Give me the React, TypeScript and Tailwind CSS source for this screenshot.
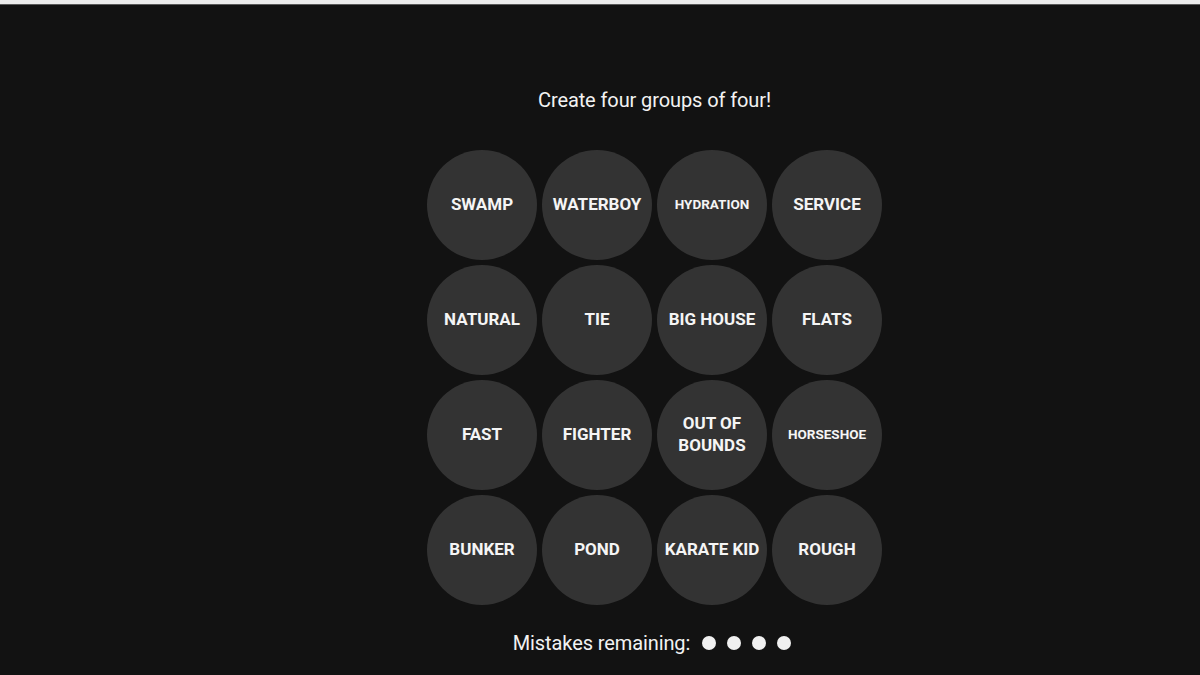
const words: { label: string; small?: boolean; wrap?: boolean }[] = [
  { label: 'SWAMP' },
  { label: 'WATERBOY' },
  { label: 'HYDRATION', small: true },
  { label: 'SERVICE' },
  { label: 'NATURAL' },
  { label: 'TIE' },
  { label: 'BIG HOUSE' },
  { label: 'FLATS' },
  { label: 'FAST' },
  { label: 'FIGHTER' },
  { label: 'OUT OF BOUNDS', wrap: true },
  { label: 'HORSESHOE', small: true },
  { label: 'BUNKER' },
  { label: 'POND' },
  { label: 'KARATE KID' },
  { label: 'ROUGH' },
];

export default function App() {
  return (
    <main className="w-[1200px] h-[675px] bg-[#121212] overflow-hidden font-['Roboto',sans-serif]">
      <div className="h-[4px] bg-[#ececec]" />
      <div className="h-[1px] bg-[#5a5a5a]" />

      <div className="flex flex-col items-center pl-[109px]">
        <h1 className="mt-[83px] text-[20px] leading-[24px] text-[#f2f2f2] tracking-[-0.1px]">
          Create four groups of four!
        </h1>

        <div className="mt-[38px] grid grid-cols-[repeat(4,110px)] gap-[5px]">
          {words.map((w) => (
            <div
              key={w.label}
              className="w-[110px] h-[110px] rounded-full bg-[#333333] flex items-center justify-center text-center pb-[2px]"
            >
              <span
                className={
                  w.small
                    ? 'text-[13.5px] font-bold text-[#f5f5f5] leading-[22px] whitespace-nowrap'
                    : w.wrap
                      ? 'text-[17px] font-bold text-[#f5f5f5] leading-[22px] max-w-[90px]'
                      : 'text-[17px] font-bold text-[#f5f5f5] leading-[22px] whitespace-nowrap'
                }
              >
                {w.label}
              </span>
            </div>
          ))}
        </div>

        <div className="mt-[26px] mr-[5px] flex items-center text-[20px] leading-[24px] text-[#f2f2f2] tracking-[-0.1px]">
          <span>Mistakes remaining:</span>
          <div className="ml-[12px] flex gap-[11px]">
            <span className="w-[14px] h-[14px] rounded-full bg-[#f0f0f0]" />
            <span className="w-[14px] h-[14px] rounded-full bg-[#f0f0f0]" />
            <span className="w-[14px] h-[14px] rounded-full bg-[#f0f0f0]" />
            <span className="w-[14px] h-[14px] rounded-full bg-[#f0f0f0]" />
          </div>
        </div>
      </div>
    </main>
  );
}
